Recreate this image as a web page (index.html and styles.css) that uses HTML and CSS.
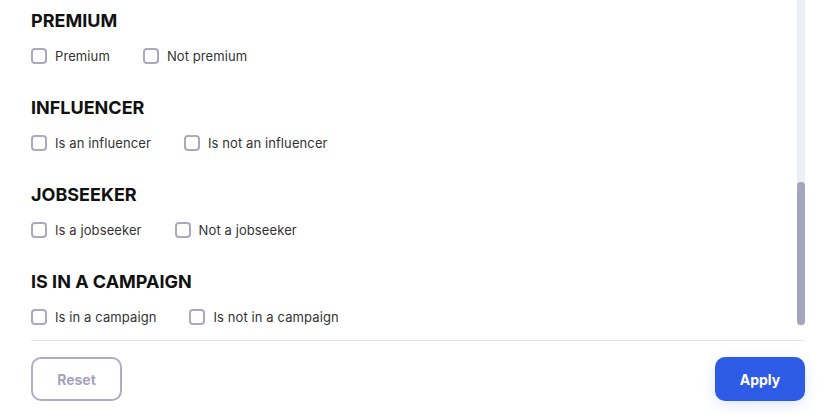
FILE: index.html
```html
<!DOCTYPE html>
<html lang="en">
<head>
  <meta charset="UTF-8">
  <title>Filters</title>
  <link rel="stylesheet" href="styles.css">
</head>
<body>

<div class="panel">
  <div class="scroll-area">
    <div class="filters">

      <div class="filter-group">
        <h3>PREMIUM</h3>
        <div class="options">
          <label class="option"><input type="checkbox"><span>Premium</span></label>
          <label class="option"><input type="checkbox"><span>Not premium</span></label>
        </div>
      </div>

      <div class="filter-group">
        <h3>INFLUENCER</h3>
        <div class="options">
          <label class="option"><input type="checkbox"><span>Is an influencer</span></label>
          <label class="option"><input type="checkbox"><span>Is not an influencer</span></label>
        </div>
      </div>

      <div class="filter-group">
        <h3>JOBSEEKER</h3>
        <div class="options">
          <label class="option"><input type="checkbox"><span>Is a jobseeker</span></label>
          <label class="option"><input type="checkbox"><span>Not a jobseeker</span></label>
        </div>
      </div>

      <div class="filter-group">
        <h3>IS IN A CAMPAIGN</h3>
        <div class="options">
          <label class="option"><input type="checkbox"><span>Is in a campaign</span></label>
          <label class="option"><input type="checkbox"><span>Is not in a campaign</span></label>
        </div>
      </div>

    </div>
    <div class="scrollbar">
      <div class="thumb"></div>
    </div>
  </div>

  <div class="footer">
    <button class="btn btn-reset">Reset</button>
    <button class="btn btn-apply">Apply</button>
  </div>
</div>

</body>
</html>
```

FILE: styles.css
```css
body {
  margin: 0;
  background: #fff;
  font-family: Inter, "Liberation Sans", sans-serif;
  color: #333;
}
.panel {
  width: 832px;
  height: 420px;
  overflow: hidden;
}
.scroll-area {
  display: flex;
  height: 330px;
  padding-left: 31px;
  padding-right: 27px;
}
.filters {
  flex: 1;
  padding-top: 9px;
}
.filter-group {
  margin-bottom: 30px;
}
.filter-group h3 {
  margin: 0 0 13px;
  font-size: 18px;
  line-height: 24px;
  font-weight: 700;
  color: #111;
}
.options {
  display: flex;
  gap: 33px;
  height: 20px;
  align-items: center;
}
.option {
  display: flex;
  align-items: center;
  gap: 8px;
  font-size: 13px;
  letter-spacing: 0.1px;
  color: #333;
  cursor: pointer;
}
.option input {
  appearance: none;
  margin: 0;
  width: 16px;
  height: 16px;
  border: 2px solid #aaa9c0;
  border-radius: 4px;
  background: #fff;
}
.scrollbar {
  width: 8px;
  height: 326px;
  background: #eeeef5;
  border-radius: 0 0 4px 4px;
}
.thumb {
  margin-top: 182px;
  height: 143px;
  background: #a4a4bc;
  border-radius: 4px;
}
.footer {
  display: flex;
  justify-content: space-between;
  margin: 10px 27px 0 31px;
  padding-top: 16px;
  border-top: 1px solid #e4e4ec;
}
.btn {
  height: 44px;
  border-radius: 10px;
  font-family: Inter, "Liberation Sans", sans-serif;
  font-size: 14px;
  font-weight: 700;
  cursor: pointer;
}
.btn-reset {
  width: 91px;
  background: #fff;
  border: 2px solid #aeadc4;
  color: #a4a3ba;
}
.btn-apply {
  width: 90px;
  background: #2e5be5;
  border: none;
  color: #fff;
  box-shadow: 0 4px 14px rgba(46, 91, 229, 0.15);
}
```
